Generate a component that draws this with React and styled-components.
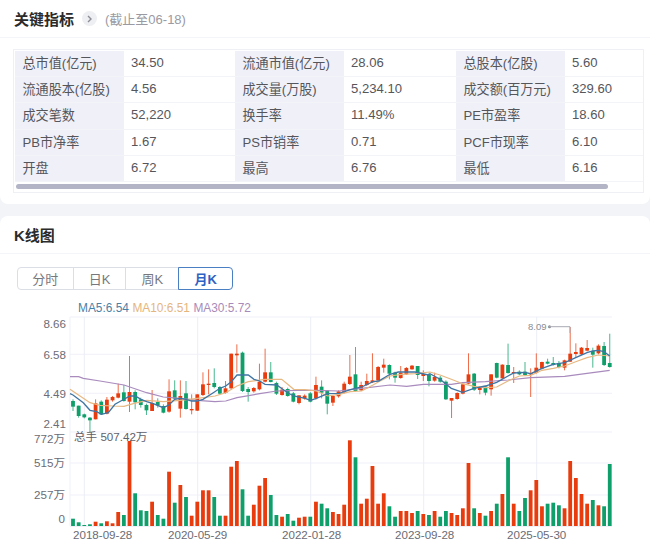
import React from "react";
import styled, { createGlobalStyle } from "styled-components";

const GlobalStyle = createGlobalStyle`
  html, body {
    margin: 0;
    height: 551px;
    overflow: hidden;
    background: #f3f4f8;
    font-family: "Liberation Sans", "Noto Sans CJK SC", sans-serif;
  }
`;

const Page = styled.div`
  width: 650px;
  height: 551px;
  overflow: hidden;
`;

const Card = styled.section`
  background: #fff;
  border-radius: ${(p) => (p.$last ? "8px 8px 0 0" : "0 0 8px 8px")};
  margin-bottom: 12px;
  height: ${(p) => (p.$last ? "335px" : "204px")};
`;

const CardHeader = styled.header`
  height: ${(p) => p.$height}px;
  box-sizing: border-box;
  padding-left: 14px;
  display: flex;
  align-items: center;
  border-bottom: 1px solid #f4f5f8;
`;

const Title = styled.h2`
  margin: 0;
  font-size: 15px;
  font-weight: 700;
  color: #2b2b2b;
`;

const MoreButton = styled.span`
  width: 15px;
  height: 15px;
  margin-left: 8px;
  border-radius: 50%;
  background: #eeeff2;
  display: flex;
  align-items: center;
  justify-content: center;
`;

const AsOf = styled.span`
  margin-left: 8px;
  font-size: 13px;
  color: #9a9aa2;
`;

const MetricsBody = styled.div`
  padding: 11px 6px 0 13px;
`;

const MetricsBox = styled.div`
  width: 631px;
  box-sizing: border-box;
  border: 1px solid #eef0f5;
  padding: 1px 0 0 1px;
`;

const MetricsGrid = styled.div`
  display: grid;
  grid-template-columns: 109px 111px 109px 112px 109px 78px;
  grid-auto-rows: 26.2px;
`;

const Cell = styled.div`
  display: flex;
  align-items: center;
  padding: 0 0 2px ${(p) => (p.$label ? "7.5px" : "7px")};
  font-size: 13.1px;
  white-space: nowrap;
  color: #55565c;
  background: ${(p) => (p.$label ? "#f0f1f8" : "#fff")};
  border-bottom: 1px solid #f3f4f8;
  box-sizing: border-box;
`;

const ScrollTrack = styled.div`
  height: 10px;
  display: flex;
  align-items: center;
`;

const ScrollThumb = styled.div`
  width: 592px;
  height: 5px;
  margin-left: 1px;
  border-radius: 3px;
  background: #b3b4c5;
`;

const Tabs = styled.div`
  display: flex;
  width: 216px;
  height: 23px;
  margin: 13px 0 0 17px;
`;

const Tab = styled.div`
  width: ${(p) => p.$width}px;
  box-sizing: border-box;
  display: flex;
  align-items: center;
  justify-content: center;
  font-size: 13px;
  color: ${(p) => (p.$active ? "#2f62c4" : "#77777d")};
  font-weight: ${(p) => (p.$active ? 700 : 400)};
  border: 1px solid ${(p) => (p.$active ? "#4a7fc4" : "#dcdee6")};
  margin-left: ${(p) => (p.$first ? 0 : "-1px")};
  border-radius: ${(p) => (p.$first ? "4px 0 0 4px" : p.$active ? "0 4px 4px 0" : "0")};
  position: relative;
  z-index: ${(p) => (p.$active ? 1 : 0)};
`;

const Legend = styled.div`
  display: flex;
  gap: 3.5px;
  height: 14px;
  margin: 11px 0 0 78px;
  font-size: 11.9px;
  line-height: 14px;
`;

const LegendItem = styled.span`
  color: ${(p) => p.$color};
`;

const ChartSvg = styled.svg`
  display: block;
  width: 650px;
  height: 237px;
`;

const AxisText = styled.text`
  font-size: 11.6px;
  fill: ${(p) => p.$fill || "#6b6c75"};
`;

const PeakText = styled.text`
  font-size: 9.5px;
  fill: #8a8b93;
`;

const RED = "#e93c0e";
const GREEN = "#0e9f6a";

const metrics = [
  ["总市值(亿元)", "34.50", "流通市值(亿元)", "28.06", "总股本(亿股)", "5.60"],
  ["流通股本(亿股)", "4.56", "成交量(万股)", "5,234.10", "成交额(百万元)", "329.60"],
  ["成交笔数", "52,220", "换手率", "11.49%", "PE市盈率", "18.60"],
  ["PB市净率", "1.67", "PS市销率", "0.71", "PCF市现率", "6.10"],
  ["开盘", "6.72", "最高", "6.76", "最低", "6.16"],
];

const tabs = [
  { name: "分时", width: 57 },
  { name: "日K", width: 53 },
  { name: "周K", width: 53 },
  { name: "月K", width: 54, active: true },
];

// candles: up?, body top, body bottom, wick top, wick bottom (3x px from y=310)
const candles = [
  [0, 270, 287, 265, 300], [0, 284, 315, 284, 320], [0, 310, 319, 308, 322], [0, 320, 328, 318, 365],
  [1, 277, 325, 265, 325], [0, 272, 310, 268, 312], [1, 266, 308, 258, 310], [1, 258, 268, 255, 272],
  [1, 247, 260, 218, 262], [0, 244, 270, 222, 272], [1, 243, 272, 135, 303], [0, 243, 274, 238, 295],
  [0, 265, 282, 260, 290], [0, 282, 298, 278, 312], [1, 276, 300, 237, 300], [0, 273, 283, 262, 290],
  [0, 285, 305, 280, 307], [1, 241, 302, 205, 305], [0, 238, 263, 208, 265], [1, 255, 293, 208, 320],
  [0, 247, 294, 210, 296], [1, 294, 298, 250, 310], [1, 250, 299, 250, 300], [1, 220, 252, 184, 255],
  [1, 218, 222, 175, 250], [0, 216, 228, 172, 232], [0, 228, 248, 225, 250], [1, 232, 246, 210, 248],
  [1, 128, 232, 128, 235], [1, 128, 133, 100, 185], [0, 125, 240, 122, 243], [0, 234, 243, 228, 272],
  [1, 231, 241, 228, 245], [1, 212, 235, 158, 238], [1, 184, 212, 113, 214], [0, 184, 213, 153, 214],
  [0, 216, 248, 212, 252], [1, 236, 252, 228, 254], [0, 234, 255, 230, 257], [0, 247, 272, 243, 274],
  [1, 253, 276, 253, 280], [1, 254, 262, 250, 266], [0, 247, 272, 243, 274], [1, 222, 262, 197, 266],
  [0, 227, 245, 208, 262], [0, 238, 278, 238, 310], [1, 255, 275, 252, 285], [1, 241, 256, 238, 260],
  [1, 218, 244, 212, 247], [1, 197, 219, 132, 222], [0, 190, 240, 108, 242], [1, 222, 238, 212, 240],
  [1, 210, 222, 188, 225], [1, 208, 214, 127, 216], [1, 168, 208, 165, 210], [1, 161, 170, 143, 185],
  [0, 162, 188, 160, 205], [0, 185, 200, 182, 215], [1, 185, 201, 165, 203], [1, 171, 190, 168, 192],
  [1, 164, 175, 162, 176], [0, 165, 192, 165, 204], [1, 189, 195, 178, 210], [0, 190, 210, 187, 226],
  [1, 198, 209, 185, 212], [0, 200, 212, 195, 215], [0, 212, 265, 208, 267], [1, 261, 269, 261, 321],
  [1, 246, 264, 244, 266], [1, 220, 248, 220, 250], [1, 190, 218, 127, 220], [0, 188, 236, 186, 240],
  [1, 229, 237, 226, 250], [0, 226, 245, 224, 253], [1, 190, 235, 190, 254], [0, 156, 200, 155, 202],
  [1, 161, 202, 160, 204], [0, 162, 186, 98, 188], [1, 183, 186, 168, 216], [0, 182, 190, 178, 192],
  [0, 182, 192, 153, 195], [1, 186, 190, 172, 258], [1, 170, 186, 127, 188], [1, 153, 173, 152, 175],
  [0, 152, 158, 143, 160], [0, 156, 162, 138, 164], [0, 156, 168, 150, 172], [1, 148, 170, 146, 178],
  [1, 128, 152, 48, 153], [1, 123, 129, 97, 140], [1, 110, 130, 108, 132], [1, 111, 119, 87, 121],
  [0, 120, 131, 110, 170], [1, 104, 127, 100, 130], [0, 105, 162, 93, 165], [0, 156, 168, 68, 170],
];

// bar heights in px, same order as candles
const volumes = [
  7.3, 3.7, 1, 1.7, 4.3, 2.7, 4.7, 2.7, 14, 11, 85, 32.7, 15.7, 15, 24.3, 11, 7.3, 54.3, 23.3, 41, 29, 10.3, 24.3, 35.7,
  35.7, 29, 10.3, 10.3, 59.3, 65, 36.7, 10.3, 21.3, 40.3, 48, 31, 11, 9.3, 12, 5.3, 8.3, 9.3, 9.3, 24.3, 22.3, 17.7, 14, 12,
  21.3, 85.7, 68.7, 22.3, 27.3, 60, 22.3, 32.7, 19.7, 9.3, 15, 15, 13, 15, 12, 11, 15, 9.3, 15, 13, 11, 17.7, 63, 17.7,
  13, 10.3, 15, 22.3, 32, 68.7, 22.3, 15, 28, 35.7, 46, 19.7, 22.3, 23.3, 20.7, 17.7, 65, 48, 32, 22.3, 26, 20.7, 19.7, 62,
];

// line points as [x, y] read at 3x, one block per crop of the chart
const toPoints = (blocks) =>
  blocks
    .flatMap(([x0, pts]) => pts.map(([x, y]) => `${(x0 + x / 3).toFixed(1)},${(310 + y / 3).toFixed(1)}`))
    .join(" ");

const ma5 = toPoints([
  [0, [[210, 248], [219, 252], [250, 275], [270, 298], [290, 302], [304, 310], [325, 305], [345, 280], [372, 265], [390, 255], [406, 255], [423, 265], [440, 272], [460, 278], [490, 290], [507, 282], [524, 265], [541, 262], [558, 265], [575, 270], [592, 270], [609, 265], [640, 245]]],
  [215, [[15, 232], [32, 225], [49, 212], [66, 192], [100, 192], [117, 205], [134, 210], [150, 220], [185, 222], [218, 245], [236, 255], [270, 262], [287, 268], [304, 262], [338, 248], [372, 247], [406, 236], [440, 228], [474, 212], [491, 210], [525, 190], [550, 183], [600, 183], [640, 192]]],
  [430, [[0, 188], [30, 205], [64, 232], [98, 244], [132, 232], [166, 225], [200, 214], [234, 195], [251, 186], [285, 184], [302, 188], [336, 172], [370, 160], [404, 155], [437, 140], [471, 125], [488, 120], [505, 118], [522, 122], [539, 135]]],
]);

const ma10 = toPoints([
  [0, [[210, 235], [240, 255], [270, 275], [300, 283], [340, 285], [372, 286], [400, 278], [440, 268], [490, 272], [540, 268], [592, 262], [625, 258]]],
  [215, [[0, 255], [32, 245], [66, 225], [100, 212], [150, 205], [200, 205], [218, 220], [236, 235], [270, 236], [304, 240], [338, 255], [372, 250], [406, 242], [440, 240], [474, 222], [491, 212], [525, 195], [560, 190], [600, 188]]],
  [430, [[0, 183], [30, 192], [64, 205], [98, 218], [132, 226], [166, 230], [200, 228], [234, 210], [268, 195], [302, 193], [336, 178], [370, 172], [404, 165], [437, 152], [471, 140], [505, 132], [539, 135]]],
]);

const ma30 = toPoints([
  [0, [[210, 197], [236, 197], [250, 202], [300, 210], [372, 222], [440, 245], [490, 258], [540, 262], [592, 268]]],
  [215, [[0, 272], [32, 270], [66, 260], [134, 248], [185, 240], [250, 238], [304, 238], [372, 240], [440, 232], [525, 222], [575, 226], [625, 220]]],
  [430, [[0, 220], [64, 220], [98, 215], [166, 212], [234, 207], [302, 200], [404, 196], [471, 187], [539, 178]]],
]);

const barX = (i) => 73 + 5.65 * i;
const zy = (v) => 310 + v / 3;

const vGrid = [84.3, 197.7, 310.7, 423.7, 536.7];
const hGrid = [316, 353.3, 392.3, 431, 462, 494];
const priceLabels = [["8.66", 327], ["6.58", 358], ["4.49", 397], ["2.41", 427]];
const volLabels = [["772万", 442], ["515万", 466], ["257万", 498], ["0", 522]];
const dateLabels = [["2018-09-28", 73], ["2020-05-29", 168], ["2022-01-28", 282], ["2023-09-28", 395], ["2025-05-30", 507]];

function KChart() {
  return (
    <ChartSvg viewBox="0 314 650 237">
      {hGrid.map((y) => (
        <line key={y} x1="70" x2="612" y1={y} y2={y} stroke="#f0f1f8" />
      ))}
      {vGrid.map((x) => (
        <line key={x} x1={x} x2={x} y1="316" y2="525" stroke="#eceef8" />
      ))}
      <line x1="70" x2="70" y1="316" y2="525" stroke="#f0f1f8" />
      <line x1="70" x2="612" y1="525.5" y2="525.5" stroke="#f0f1f8" />

      {candles.map(([up, top, bottom, hi, lo], i) => {
        const color = up ? RED : GREEN;
        const x = barX(i);
        return (
          <g key={i} fill={color}>
            <rect x={x - 0.5} y={zy(hi)} width="1" height={(lo - hi) / 3} opacity="0.75" />
            <rect x={x - 1.9} y={zy(top)} width="3.8" height={Math.max((bottom - top) / 3, 1)} />
          </g>
        );
      })}

      <polyline points={ma30} fill="none" stroke="#a98bbd" strokeWidth="1.2" />
      <polyline points={ma10} fill="none" stroke="#e7b882" strokeWidth="1.2" />
      <polyline points={ma5} fill="none" stroke="#3f74a3" strokeWidth="1.3" />

      <PeakText x="528" y="329">8.09</PeakText>
      <circle cx="549.5" cy="325.7" r="1.5" fill="#8a8b93" />
      <polyline points="549,325.7 570,325.7 570,332" fill="none" stroke="#a9aab3" />

      {priceLabels.map(([t, y]) => (
        <AxisText key={t} x="66" y={y} textAnchor="end">{t}</AxisText>
      ))}
      {volLabels.map(([t, y]) => (
        <AxisText key={t} x="65" y={y} textAnchor="end">{t}</AxisText>
      ))}

      {volumes.map((h, i) => (
        <rect key={i} x={barX(i) - 1.9} y={525 - h} width="3.8" height={h} fill={candles[i][0] ? RED : GREEN} />
      ))}

      <AxisText x="74" y="440" $fill="#5f6068">总手 507.42万</AxisText>

      {dateLabels.map(([t, x]) => (
        <AxisText key={t} x={x} y="538">{t}</AxisText>
      ))}
    </ChartSvg>
  );
}

export default function App() {
  return (
    <Page>
      <GlobalStyle />
      <Card>
        <CardHeader $height={38}>
          <Title>关键指标</Title>
          <MoreButton>
            <svg width="7" height="8" viewBox="0 0 7 8">
              <path d="M2 1l3 3-3 3" fill="none" stroke="#8b8c94" strokeWidth="1.4" />
            </svg>
          </MoreButton>
          <AsOf>(截止至06-18)</AsOf>
        </CardHeader>
        <MetricsBody>
          <MetricsBox>
            <MetricsGrid>
              {metrics.flat().map((text, i) => (
                <Cell key={i} $label={i % 2 === 0}>{text}</Cell>
              ))}
            </MetricsGrid>
            <ScrollTrack>
              <ScrollThumb />
            </ScrollTrack>
          </MetricsBox>
        </MetricsBody>
      </Card>
      <Card $last>
        <CardHeader $height={38}>
          <Title>K线图</Title>
        </CardHeader>
        <Tabs>
          {tabs.map((t, i) => (
            <Tab key={t.name} $width={t.width + (i ? 1 : 0)} $first={i === 0} $active={t.active}>
              {t.name}
            </Tab>
          ))}
        </Tabs>
        <Legend>
          <LegendItem $color="#4a7fa8">MA5:6.54</LegendItem>
          <LegendItem $color="#e5b57e">MA10:6.51</LegendItem>
          <LegendItem $color="#a88bb8">MA30:5.72</LegendItem>
        </Legend>
        <KChart />
      </Card>
    </Page>
  );
}
